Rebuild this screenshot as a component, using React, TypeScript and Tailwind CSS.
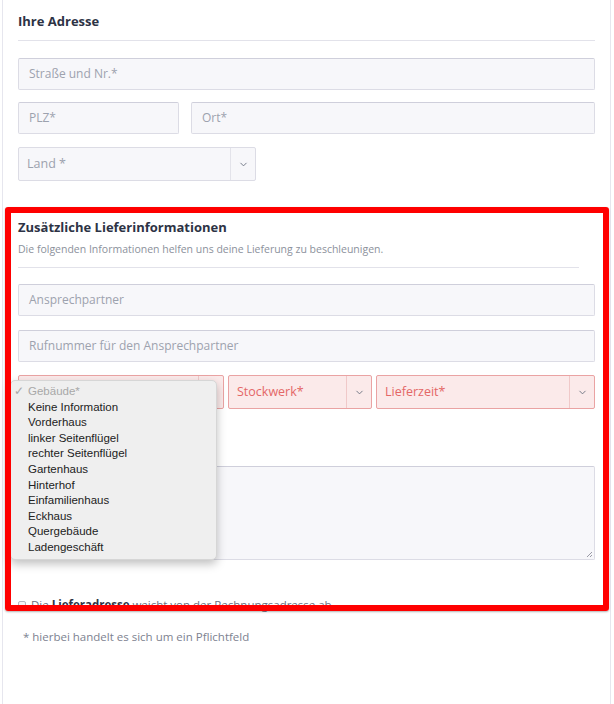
import { ChevronDown } from 'lucide-react';

const font = { fontFamily: '"Open Sans", "Noto Sans", sans-serif' };

function TextInput({ placeholder, className = '' }: { placeholder: string; className?: string }) {
  return (
    <div
      className={`h-[32px] flex items-center px-[10px] bg-[#f7f7fa] border border-[#dcdce5] border-t-[#cfcfdb] rounded-[2px] text-[12px] text-[#9da2ae] ${className}`}
    >
      {placeholder}
    </div>
  );
}

function SelectBox({ label, error, className = '' }: { label: string; error?: boolean; className?: string }) {
  const tone = error
    ? 'bg-[#fbeaea] border-[#eaa3a3] text-[#e46767]'
    : 'bg-[#f7f7fa] border-[#dcdce5] text-[#9da2ae]';
  return (
    <div className={`h-[34px] flex border rounded-[2px] text-[12.5px] ${tone} ${className}`}>
      <div className="flex-1 flex items-center px-[8px]">{label}</div>
      <div className={`w-[25px] flex items-center justify-center border-l ${error ? 'border-[#f0c9c9]' : 'border-[#e3e3ea]'}`}>
        <ChevronDown className="w-[11px] h-[11px] text-[#6b7280]" strokeWidth={2} />
      </div>
    </div>
  );
}

const buildings = [
  'Keine Information',
  'Vorderhaus',
  'linker Seitenflügel',
  'rechter Seitenflügel',
  'Gartenhaus',
  'Hinterhof',
  'Einfamilienhaus',
  'Eckhaus',
  'Quergebäude',
  'Ladengeschäft',
];

export default function App() {
  return (
    <div className="relative w-[614px] h-[704px] bg-white overflow-hidden" style={font}>
      <div className="ml-[2px] w-[609px] h-[704px] border-l border-r border-[#e6e6ee] px-[15px] pt-[12px]">
        <h2 className="text-[13px] leading-[18px] font-bold text-[#2d3345]">Ihre Adresse</h2>
        <div className="mt-[10px] border-t border-[#e2e2ea]" />

        <TextInput placeholder="Straße und Nr.*" className="mt-[17px]" />
        <div className="mt-[12px] flex gap-[12px]">
          <TextInput placeholder="PLZ*" className="w-[161px]" />
          <TextInput placeholder="Ort*" className="flex-1" />
        </div>
        <SelectBox label="Land *" className="mt-[13px] w-[238px]" />

        <h2 className="mt-[37px] text-[13px] leading-[18px] font-bold text-[#2d3345]">Zusätzliche Lieferinformationen</h2>
        <p className="mt-[5px] text-[10.5px] leading-[16px] text-[#8c919c]">
          Die folgenden Informationen helfen uns deine Lieferung zu beschleunigen.
        </p>
        <div className="mt-[10px] mr-[16px] border-t border-[#e2e2ea]" />

        <TextInput placeholder="Ansprechpartner" className="mt-[16px]" />
        <TextInput placeholder="Rufnummer für den Ansprechpartner" className="mt-[14px]" />

        <div className="mt-[13px] flex gap-[4px]">
          {/* Beschriftung liegt unter dem geöffneten Menü */}
          <SelectBox label="" error className="w-[206px]" />
          <SelectBox label="Stockwerk*" error className="w-[144px]" />
          <SelectBox label="Lieferzeit*" error className="flex-1" />
        </div>

        <div className="relative mt-[57px] h-[94px] bg-[#f7f7fa] border border-[#dcdce5] border-t-[#cfcfdb] rounded-[2px]">
          <svg className="absolute right-[1px] bottom-[1px]" width="8" height="8" viewBox="0 0 8 8">
            <path d="M7 2L2 7M7 5L5 7" stroke="#9a9aa5" strokeWidth="1" />
          </svg>
        </div>

        <label className="mt-[37px] flex items-center gap-[5px] text-[11.5px] leading-[16px] text-[#6b7180]">
          <span className="w-[8px] h-[8px] border border-[#b5b8c0] rounded-[2px] bg-[#f4f4f6]" />
          <span>
            Die <b className="text-[#2d3345]">Lieferadresse</b> weicht von der Rechnungsadresse ab
          </span>
        </label>

        <p className="mt-[16px] ml-[5px] text-[11.5px] leading-[16px] text-[#7d8290]">
          * hierbei handelt es sich um ein Pflichtfeld
        </p>
      </div>

      {/* offenes Gebäude-Dropdown */}
      <div
        className="absolute left-[10px] top-[380px] w-[207px] py-[3px] bg-[#efefef] rounded-[5px] border border-[#d6d6d6] shadow-[0_4px_10px_rgba(0,0,0,0.25)] text-[11.5px] leading-[15.6px] text-[#222]"
        style={{ fontFamily: '"Liberation Sans", Arial, sans-serif' }}
      >
        <div className="relative pl-[17px] text-[#a8a8a8]">
          <span className="absolute left-[3px] top-0">✓</span>
          Gebäude*
        </div>
        {buildings.map(b => (
          <div key={b} className="pl-[17px]">{b}</div>
        ))}
      </div>

      {/* Markierung */}
      <div className="absolute left-[5px] top-[207px] w-[604px] h-[404px] border-[6px] border-[#ff0000] rounded-[3px] shadow-[0_1px_2px_rgba(0,0,0,0.3)] pointer-events-none" />
    </div>
  );
}
